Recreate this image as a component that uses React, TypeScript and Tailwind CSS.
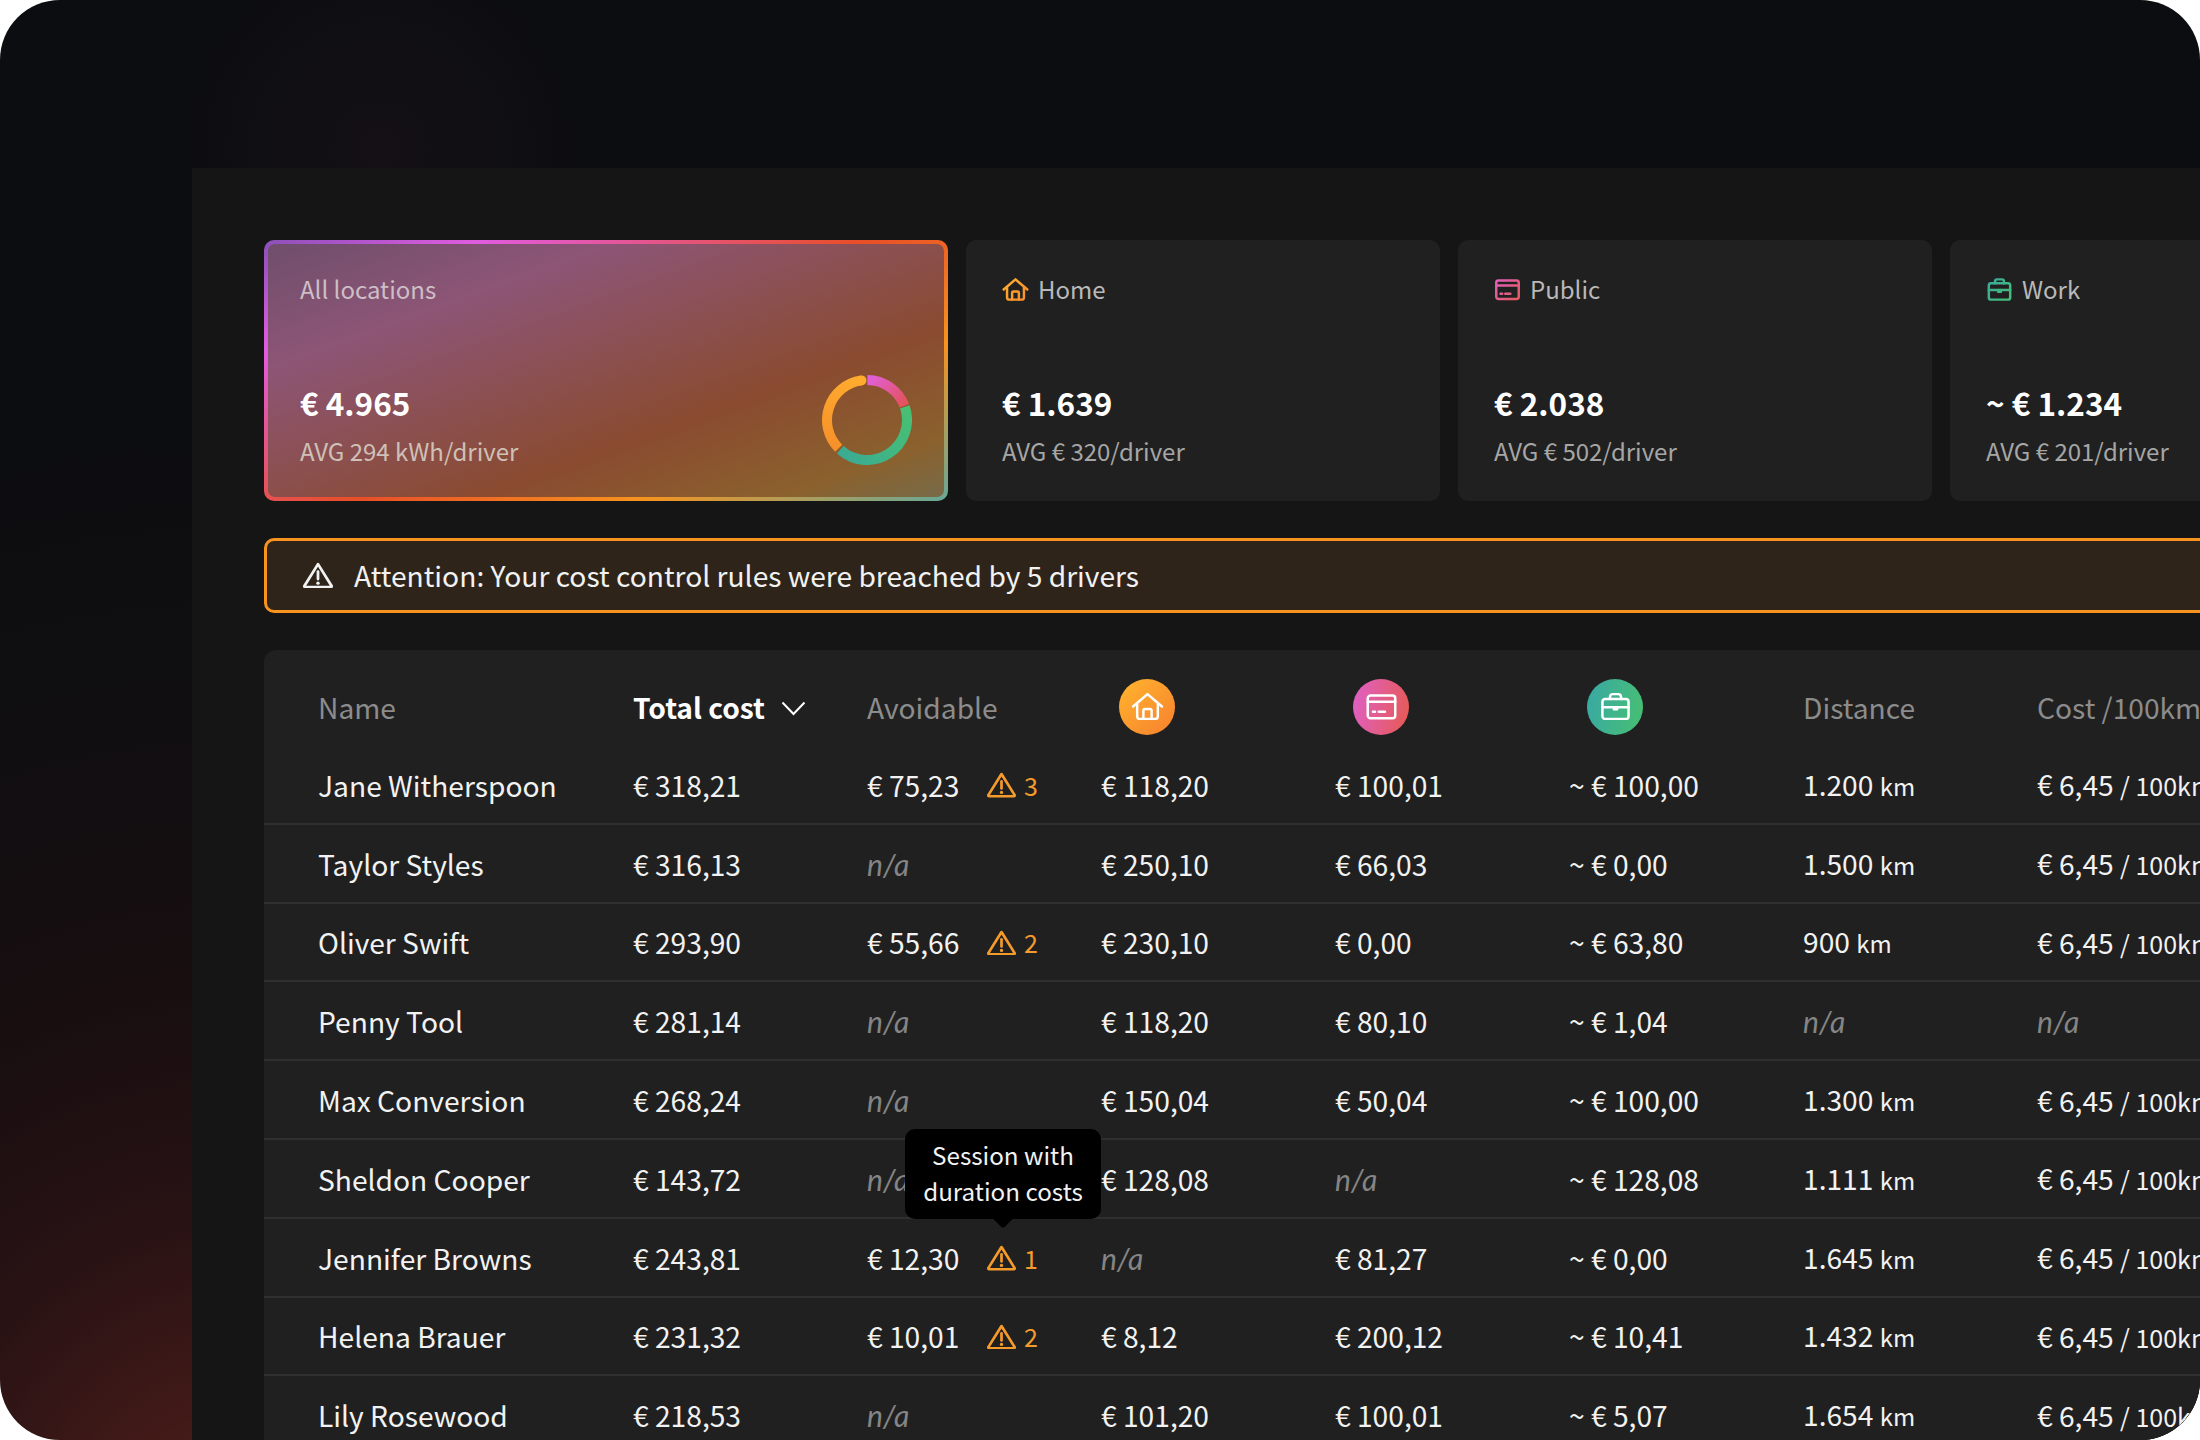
import React from "react";

const sans = '"Noto Sans CJK SC", "Noto Sans", sans-serif';

type IconProps = { kind: "home" | "card" | "case"; stroke: string; size: number; sw?: number };

function Glyph({ kind, stroke, size, sw = 1.6 }: IconProps) {
  const common = { fill: "none", stroke, strokeWidth: sw, strokeLinecap: "round" as const, strokeLinejoin: "round" as const };
  return (
    <svg width={size} height={size} viewBox="0 0 24 24" className="shrink-0">
      {kind === "home" && (
        <g {...common}>
          <path d="M1.5 12 L12 3 L22.5 12" />
          <path d="M4.5 10.5 V19 a2 2 0 0 0 2 2 H17.5 a2 2 0 0 0 2 -2 V10.5" />
          <path d="M9 21 V15 a1.2 1.2 0 0 1 1.2 -1.2 h3.6 a1.2 1.2 0 0 1 1.2 1.2 V21" />
        </g>
      )}
      {kind === "card" && (
        <g {...common}>
          <rect x="2" y="4" width="20" height="16.5" rx="2" />
          <path d="M2 8.5 H22" />
          <path d="M5.8 15.8 H7.3" />
          <path d="M10 15.8 H14.5" />
        </g>
      )}
      {kind === "case" && (
        <g {...common}>
          <rect x="2.5" y="6.5" width="19" height="14.5" rx="2" />
          <path d="M8 6.5 V5 a2 2 0 0 1 2 -2 h4 a2 2 0 0 1 2 2 v1.5" />
          <path d="M2.5 12.5 H21.5" />
          <path d="M10.8 12.5 V14 H13.2 V12.5" />
        </g>
      )}
    </svg>
  );
}

function GradientIcon({ kind, id, from, to }: { kind: IconProps["kind"]; id: string; from: string; to: string }) {
  return (
    <span className="relative flex h-[27px] w-[27px] shrink-0 items-center justify-center">
      <svg width="0" height="0" className="absolute">
        <defs>
          <linearGradient id={id} x1="0" y1="0" x2="24" y2="24" gradientUnits="userSpaceOnUse">
            <stop offset="0" stopColor={from} />
            <stop offset="1" stopColor={to} />
          </linearGradient>
        </defs>
      </svg>
      <Glyph kind={kind} stroke={`url(#${id})`} size={27} sw={2.2} />
    </span>
  );
}

function Warn({ size = 29, color = "#f59b2c" }: { size?: number; color?: string }) {
  return (
    <svg width={size} height={size * 0.89} viewBox="0 0 28 25" className="shrink-0">
      <path d="M14 2 L26.6 22.2 a0.8 0.8 0 0 1 -0.7 1.3 H2.1 a0.8 0.8 0 0 1 -0.7 -1.3 Z" fill="none" stroke={color} strokeWidth="2.6" strokeLinejoin="round" />
      <path d="M14 9 V16" stroke={color} strokeWidth="2.6" strokeLinecap="round" />
      <circle cx="14" cy="19.8" r="1.6" fill={color} />
    </svg>
  );
}

function pt(r: number, deg: number) {
  const a = ((deg - 90) * Math.PI) / 180;
  return `${(45 + r * Math.cos(a)).toFixed(2)} ${(45 + r * Math.sin(a)).toFixed(2)}`;
}
function arc(a: number, b: number) {
  const large = b - a > 180 ? 1 : 0;
  return `M${pt(40, a)} A40 40 0 ${large} 1 ${pt(40, b)}`;
}

function Donut() {
  return (
    <svg width="90" height="90" viewBox="0 0 90 90" className="absolute left-[558px] top-[135px]">
      <defs>
        <linearGradient id="dp" x1="45" y1="5" x2="85" y2="35" gradientUnits="userSpaceOnUse">
          <stop offset="0" stopColor="#e160dc" />
          <stop offset="1" stopColor="#e4504c" />
        </linearGradient>
        <linearGradient id="dg" x1="85" y1="30" x2="15" y2="80" gradientUnits="userSpaceOnUse">
          <stop offset="0" stopColor="#48c072" />
          <stop offset="1" stopColor="#3aaa94" />
        </linearGradient>
        <linearGradient id="do" x1="40" y1="5" x2="15" y2="75" gradientUnits="userSpaceOnUse">
          <stop offset="0" stopColor="#ffac2e" />
          <stop offset="1" stopColor="#f6902a" />
        </linearGradient>
      </defs>
      <path d={arc(0.5, 69)} fill="none" stroke="url(#dp)" strokeWidth="10" />
      <path d={arc(71, 222)} fill="none" stroke="url(#dg)" strokeWidth="10" />
      <path d={arc(225, 352)} fill="none" stroke="url(#do)" strokeWidth="10" />
      <circle cx={45 + 40 * Math.sin((-8 * Math.PI) / 180)} cy={45 - 40 * Math.cos((-8 * Math.PI) / 180)} r="5" fill="#ffac2e" />
    </svg>
  );
}

function StatCard({ label, value, avg, icon }: { label: string; value: string; avg: string; icon: React.ReactNode }) {
  return (
    <div className="flex h-[261px] w-[474px] shrink-0 flex-col rounded-[10px] bg-[#202020] pl-[36px] pt-[31px]">
      <div className="flex h-[36px] items-center gap-[9px] text-[24px] leading-[36px] text-[#b9b9b9]">
        {icon}
        <span>{label}</span>
      </div>
      <div className="mt-[73px] text-[31.5px] font-bold leading-[44px] text-white">{value}</div>
      <div className="mt-[9px] text-[24px] leading-[36px] text-[#a6a6a6]">{avg}</div>
    </div>
  );
}

function NA() {
  return <span className="text-[30px] italic text-[#858585]" style={{ fontFamily: '"Lato", sans-serif' }}>n/a</span>;
}

function Dist({ v }: { v: string }) {
  if (v === "n/a") return <NA />;
  return (
    <span>
      {v} <span className="text-[24px]">km</span>
    </span>
  );
}

function Cost({ v }: { v: string }) {
  if (v === "n/a") return <NA />;
  return (
    <span className="whitespace-nowrap">
      {v} <span className="text-[25px]">/ 100km</span>
    </span>
  );
}

type Row = {
  name: string;
  total: string;
  avoid: string;
  warn?: number;
  home: string;
  pub: string;
  work: string;
  dist: string;
  cost: string;
};

const C = "€ 6,45";
const rows: Row[] = [
  { name: "Jane Witherspoon", total: "€ 318,21", avoid: "€ 75,23", warn: 3, home: "€ 118,20", pub: "€ 100,01", work: "~ € 100,00", dist: "1.200", cost: C },
  { name: "Taylor Styles", total: "€ 316,13", avoid: "n/a", home: "€ 250,10", pub: "€ 66,03", work: "~ € 0,00", dist: "1.500", cost: C },
  { name: "Oliver Swift", total: "€ 293,90", avoid: "€ 55,66", warn: 2, home: "€ 230,10", pub: "€ 0,00", work: "~ € 63,80", dist: "900", cost: C },
  { name: "Penny Tool", total: "€ 281,14", avoid: "n/a", home: "€ 118,20", pub: "€ 80,10", work: "~ € 1,04", dist: "n/a", cost: "n/a" },
  { name: "Max Conversion", total: "€ 268,24", avoid: "n/a", home: "€ 150,04", pub: "€ 50,04", work: "~ € 100,00", dist: "1.300", cost: C },
  { name: "Sheldon Cooper", total: "€ 143,72", avoid: "n/a", home: "€ 128,08", pub: "n/a", work: "~ € 128,08", dist: "1.111", cost: C },
  { name: "Jennifer Browns", total: "€ 243,81", avoid: "€ 12,30", warn: 1, home: "n/a", pub: "€ 81,27", work: "~ € 0,00", dist: "1.645", cost: C },
  { name: "Helena Brauer", total: "€ 231,32", avoid: "€ 10,01", warn: 2, home: "€ 8,12", pub: "€ 200,12", work: "~ € 10,41", dist: "1.432", cost: C },
  { name: "Lily Rosewood", total: "€ 218,53", avoid: "n/a", home: "€ 101,20", pub: "€ 100,01", work: "~ € 5,07", dist: "1.654", cost: C },
];

function Val({ v }: { v: string }) {
  return v === "n/a" ? <NA /> : <span>{v}</span>;
}

function HeadIcon({ kind, bg }: { kind: IconProps["kind"]; bg: string }) {
  return (
    <div className={`ml-[18px] flex h-[56px] w-[56px] items-center justify-center rounded-full ${bg}`}>
      <Glyph kind={kind} stroke="#ffffff" size={33} sw={1.8} />
    </div>
  );
}

export default function App() {
  return (
    <div
      className="h-[1440px] w-[2200px] overflow-hidden rounded-[60px] bg-[radial-gradient(circle_at_380px_150px,#141016_0px,transparent_220px),radial-gradient(circle_at_250px_1560px,#4a1c18_0px,#451b18_125px,#281214_350px,#180e10_570px,#0f0e11_900px,#0c0d10_1200px)] pl-[192px] pt-[168px]"
      style={{ fontFamily: sans }}
    >
      <div className="h-[1272px] w-[2008px] bg-[#151515] pl-[72px] pt-[72px]">
        {/* Stat cards */}
        <div className="flex gap-[18px]">
          <div className="relative h-[261px] w-[684px] shrink-0 rounded-[10px] bg-[linear-gradient(153deg,#8a50b8_0%,#e05ce0_18%,#e84e28_50%,#f7931e_74%,#66a898_100%)] p-[4px]">
            <div className="h-full w-full rounded-[7px] bg-[linear-gradient(160deg,#6f4e6c_0%,#8d5576_25%,#8a4b30_66%,#8b612d_88%,#776a48_100%)] pl-[32px] pt-[27px]">
              <div className="h-[36px] text-[24px] leading-[36px] text-[#cdbfc6]">All locations</div>
              <div className="mt-[73px] text-[31.5px] font-bold leading-[44px] text-white">€ 4.965</div>
              <div className="mt-[9px] text-[24px] leading-[36px] text-[#cfc0b8]">AVG 294 kWh/driver</div>
              <Donut />
            </div>
          </div>
          <StatCard label="Home" value="€ 1.639" avg="AVG € 320/driver" icon={<GradientIcon kind="home" id="gh" from="#ffb52e" to="#f7872e" />} />
          <StatCard label="Public" value="€ 2.038" avg="AVG € 502/driver" icon={<GradientIcon kind="card" id="gp" from="#e060c8" to="#e65a50" />} />
          <StatCard label="Work" value="~ € 1.234" avg="AVG € 201/driver" icon={<GradientIcon kind="case" id="gw" from="#38a8a0" to="#48c070" />} />
        </div>

        {/* Alert */}
        <div className="mt-[37px] flex h-[75px] w-[2000px] items-center rounded-[10px] border-[3px] border-[#f7931e] bg-[#2e241a] pb-[1px] pl-[36px] text-[28.2px] leading-[40px] text-[#f2f2f2]">
          <Warn size={30} color="#f2f2f2" />
          <span className="ml-[21px]">Attention: Your cost control rules were breached by 5 drivers</span>
        </div>

        {/* Table */}
        <div className="relative mt-[37px] w-[2000px] rounded-t-[12px] bg-[#202020] text-[28.2px] text-[#f2f2f2]">
          <div className="grid h-[96px] grid-cols-[315px_234px_234px_234px_234px_234px_234px_234px] items-center pl-[54px] pt-[17px] text-[#8c8c8c]">
            <span className="leading-[40px]">Name</span>
            <span className="flex items-center gap-[16px] font-bold leading-[40px] text-white">
              Total cost
              <svg width="25" height="15" viewBox="0 0 25 15" className="mt-[3px]">
                <path d="M1.5 1.5 L12.5 13 L23.5 1.5" fill="none" stroke="#ffffff" strokeWidth="2" />
              </svg>
            </span>
            <span className="leading-[40px]">Avoidable</span>
            <HeadIcon kind="home" bg="bg-[linear-gradient(135deg,#ffb52e,#f7802e)]" />
            <HeadIcon kind="card" bg="bg-[linear-gradient(100deg,#df60c8,#e65a50)]" />
            <HeadIcon kind="case" bg="bg-[linear-gradient(100deg,#38a8a6,#48c070)]" />
            <span className="leading-[40px]">Distance</span>
            <span className="leading-[40px]">Cost /100km</span>
          </div>
          {rows.map((r) => (
            <div
              key={r.name}
              className="grid h-[78.8px] grid-cols-[315px_234px_234px_234px_234px_234px_234px_234px] items-center border-b-[2px] border-[#2f2f2f] pl-[54px] pt-[1px] leading-[40px]"
            >
              <span>{r.name}</span>
              <span>{r.total}</span>
              <span className="flex items-center">
                {r.avoid === "n/a" ? (
                  <NA />
                ) : (
                  <>
                    <span className="w-[120px]">{r.avoid}</span>
                    <Warn size={29} />
                    <span className="ml-[8px] text-[25px] text-[#f59b2c]">{r.warn}</span>
                  </>
                )}
              </span>
              <Val v={r.home} />
              <Val v={r.pub} />
              <Val v={r.work} />
              <Dist v={r.dist} />
              <Cost v={r.cost} />
            </div>
          ))}
          {/* Tooltip */}
          <div className="absolute left-[641px] top-[479px] flex h-[90px] w-[196px] flex-col items-center justify-center rounded-[10px] bg-black pb-[3px] text-center text-[24.2px] leading-[36px] text-[#f2f2f2]">
            <span>Session with</span>
            <span>duration costs</span>
            <div className="absolute bottom-[-6px] left-[89px] h-[18px] w-[18px] rotate-45 rounded-[3px] bg-black" />
          </div>
        </div>
      </div>
    </div>
  );
}
